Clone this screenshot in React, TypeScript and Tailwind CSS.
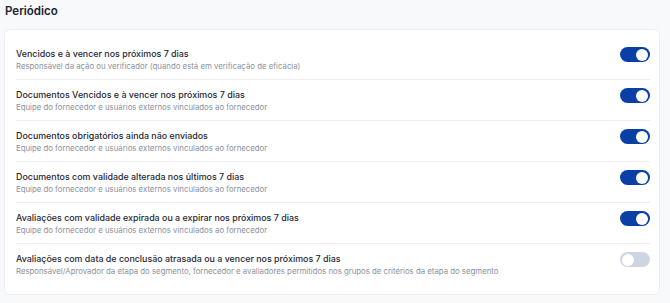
import React, { useState } from 'react';

type Item = { title: string; desc: string; on: boolean };

const items: Item[] = [
  {
    title: 'Vencidos e à vencer nos próximos 7 dias',
    desc: 'Responsável da ação ou verificador (quando está em verificação de eficácia)',
    on: true,
  },
  {
    title: 'Documentos Vencidos e à vencer nos próximos 7 dias',
    desc: 'Equipe do fornecedor e usuários externos vinculados ao fornecedor',
    on: true,
  },
  {
    title: 'Documentos obrigatórios ainda não enviados',
    desc: 'Equipe do fornecedor e usuários externos vinculados ao fornecedor',
    on: true,
  },
  {
    title: 'Documentos com validade alterada nos últimos 7 dias',
    desc: 'Equipe do fornecedor e usuários externos vinculados ao fornecedor',
    on: true,
  },
  {
    title: 'Avaliações com validade expirada ou a expirar nos próximos 7 dias',
    desc: 'Equipe do fornecedor e usuários externos vinculados ao fornecedor',
    on: true,
  },
  {
    title: 'Avaliações com data de conclusão atrasada ou a vencer nos próximos 7 dias',
    desc: 'Responsável/Aprovador da etapa do segmento, fornecedor e avaliadores permitidos nos grupos de critérios da etapa do segmento',
    on: false,
  },
];

const Toggle: React.FC<{ on: boolean; onClick: () => void }> = ({ on, onClick }) => (
  <button
    type="button"
    onClick={onClick}
    className={`relative h-[15px] w-[30px] shrink-0 rounded-full transition ${
      on ? 'bg-[#0a3fa6]' : 'bg-[#cdd5e2]'
    }`}
  >
    <span
      className={`absolute top-[1.5px] h-[12px] w-[12px] rounded-full bg-white transition ${
        on ? 'left-[16px]' : 'left-[2px]'
      }`}
    />
  </button>
);

const App: React.FC = () => {
  const [state, setState] = useState(items.map((i) => i.on));

  return (
    <div className="min-h-[303px] w-[670px] bg-[#f8f9fb] font-['Inter',sans-serif]">
      <h2 className="pl-[5px] pt-[2px] text-[11.5px] font-semibold leading-[18px] text-[#1b2230]">Periódico</h2>

      <div className="ml-[4px] mr-[10px] mt-[9px] rounded-md border border-[#eceef2] bg-white pl-[11px] pr-[9px] pt-[9px] pb-[10px]">
        {items.map((item, i) => (
          <div
            key={item.title}
            className={`flex items-start justify-between gap-4 pt-2 pb-[7px] ${
              i < items.length - 1 ? 'border-b border-[#eceef1]' : ''
            }`}
          >
            <div className="min-w-0">
              <p className="text-[8.9px] font-medium leading-[13px] text-[#1f2633]">{item.title}</p>
              <p className="text-[7.8px] leading-[12px] text-[#8b919c]">{item.desc}</p>
            </div>
            <Toggle
              on={state[i]}
              onClick={() => setState((s) => s.map((v, j) => (j === i ? !v : v)))}
            />
          </div>
        ))}
      </div>
    </div>
  );
};

export default App;
